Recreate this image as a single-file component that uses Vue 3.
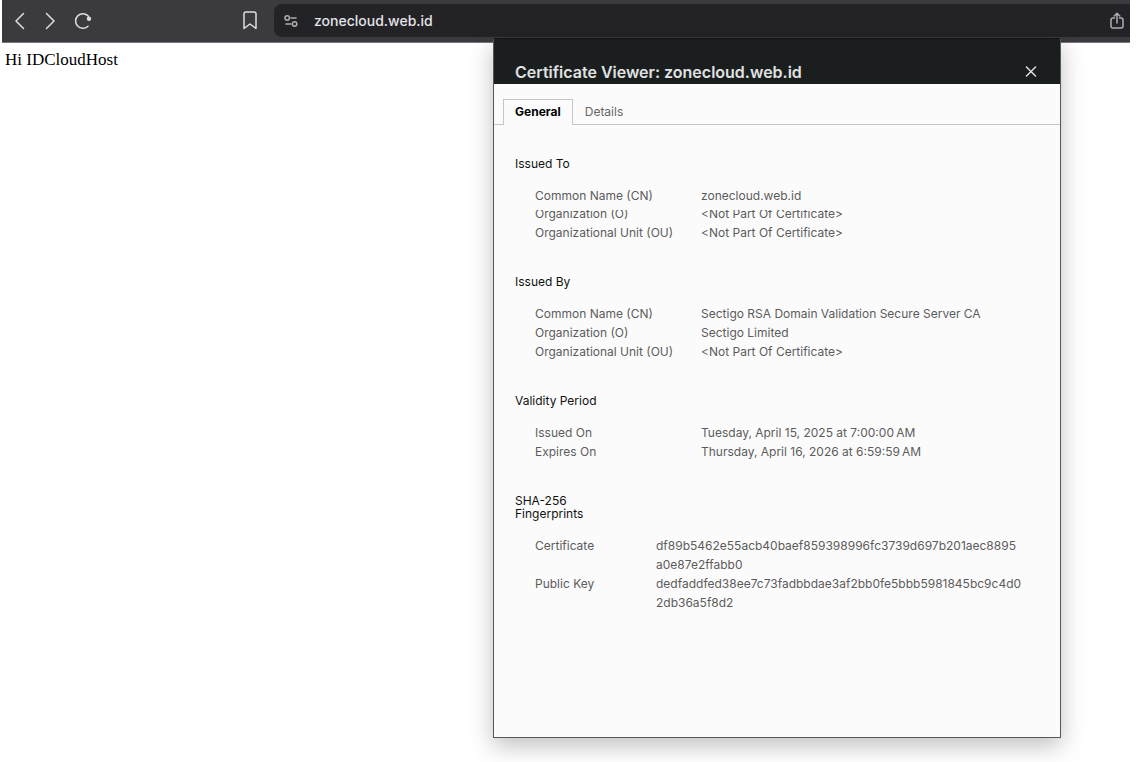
<script setup>
import { ref } from 'vue'

const address = ref('zonecloud.web.id')
const activeTab = ref('General')
const tabs = ['General', 'Details']

const sections = [
  {
    title: 'Issued To',
    rows: [
      { label: 'Common Name (CN)', value: 'zonecloud.web.id' },
      { label: 'Organization (O)', value: '<Not Part Of Certificate>', cut: true },
      { label: 'Organizational Unit (OU)', value: '<Not Part Of Certificate>' },
    ],
  },
  {
    title: 'Issued By',
    rows: [
      { label: 'Common Name (CN)', value: 'Sectigo RSA Domain Validation Secure Server CA' },
      { label: 'Organization (O)', value: 'Sectigo Limited' },
      { label: 'Organizational Unit (OU)', value: '<Not Part Of Certificate>' },
    ],
  },
  {
    title: 'Validity Period',
    rows: [
      { label: 'Issued On', value: 'Tuesday, April 15, 2025 at 7:00:00\u202fAM' },
      { label: 'Expires On', value: 'Thursday, April 16, 2026 at 6:59:59\u202fAM' },
    ],
  },
  {
    title: 'SHA-256 Fingerprints',
    narrow: true,
    rows: [
      { label: 'Certificate', value: 'df89b5462e55acb40baef859398996fc3739d697b201aec8895\na0e87e2ffabb0' },
      { label: 'Public Key', value: 'dedfaddfed38ee7c73fadbbdae3af2bb0fe5bbb5981845bc9c4d0\n2db36a5f8d2' },
    ],
  },
]
</script>

<template>
  <div class="browser">
    <header class="toolbar">
      <nav class="history" aria-label="History">
        <button class="icon-button" aria-label="Back">
          <svg width="12" height="18" viewBox="0 0 12 18"><path d="M9.5 1.5 2 9l7.500 7.500" /></svg>
        </button>
        <button class="icon-button" aria-label="Forward">
          <svg width="12" height="18" viewBox="0 0 12 18"><path d="M2.500 1.500 10 9l-7.500 7.500" /></svg>
        </button>
        <button class="icon-button" aria-label="Reload">
          <svg width="18" height="18" viewBox="0 0 18 18">
            <path d="M14 14.200A7.300 7.300 0 1 1 14.400 4.200" />
            <circle class="dot" cx="15" cy="6.800" r="2.200" />
          </svg>
        </button>
      </nav>
      <button class="icon-button" aria-label="Bookmark">
        <svg width="14" height="19" viewBox="0 0 14 19">
          <path d="M1 3a2 2 0 0 1 2-2h8a2 2 0 0 1 2 2v14.500l-6-4.500-6 4.500z" />
        </svg>
      </button>
      <div class="address">
        <button class="icon-button dim" aria-label="Site settings">
          <svg width="14" height="14" viewBox="0 0 14 14">
            <circle cx="3.200" cy="4" r="2.200" /><path d="M7 4h5" />
            <circle cx="10.600" cy="10" r="2.200" /><path d="M2 10h5" />
          </svg>
        </button>
        <input v-model="address" class="url" aria-label="Address" />
        <button class="icon-button dim" aria-label="Share">
          <svg width="14" height="18" viewBox="0 0 14 18">
            <path d="M4.500 6H3a2 2 0 0 0-2 2v6a2 2 0 0 0 2 2h8a2 2 0 0 0 2-2V8a2 2 0 0 0-2-2H9.500M7 11V1.500M4.200 4 7 1.300 9.800 4" />
          </svg>
        </button>
      </div>
    </header>

    <main class="page">Hi IDCloudHost</main>

    <section class="dialog" role="dialog" aria-labelledby="dialog-title">
      <header class="dialog-head">
        <h1 id="dialog-title">Certificate Viewer: zonecloud.web.id</h1>
        <button class="icon-button" aria-label="Close">
          <svg width="12" height="12" viewBox="0 0 12 12"><path d="m1.500 1 9 9m0-9-9 9" /></svg>
        </button>
      </header>
      <div class="tabs" role="tablist">
        <button
          v-for="tab in tabs"
          :key="tab"
          class="tab"
          :class="{ active: tab === activeTab }"
          role="tab"
          :aria-selected="tab === activeTab"
          @click="activeTab = tab"
        >{{ tab }}</button>
      </div>
      <div class="details">
        <section v-for="s in sections" :key="s.title" class="group" :class="{ narrow: s.narrow }">
          <h2>{{ s.title }}</h2>
          <dl>
            <div v-for="row in s.rows" :key="row.label" class="row" :class="{ cut: row.cut }">
              <dt>{{ row.label }}</dt>
              <dd>{{ row.value }}</dd>
            </div>
          </dl>
        </section>
      </div>
    </section>
  </div>
</template>

<style>
body {
  margin: 0;
  background: #fff;
}
</style>

<style scoped>
.browser {
  position: relative;
  box-sizing: border-box;
  min-height: 100vh;
  padding: 0 8px 0 2px;
  overflow: hidden;
  font-family: Inter, "Liberation Sans", sans-serif;
}
.toolbar {
  display: flex;
  align-items: center;
  box-sizing: border-box;
  height: 43px;
  padding: 4px 0 5px 12px;
  background: #3b3a3f;
  border-bottom: 1px solid #77767a;
}
.history {
  display: flex;
  align-items: center;
  gap: 18px;
  width: 229px;
}
.icon-button {
  display: flex;
  flex: none;
  padding: 0;
  border: 0;
  background: none;
  color: #dededf;
}
.icon-button svg {
  fill: none;
  stroke: currentColor;
  stroke-width: 1.5;
  stroke-linecap: round;
  stroke-linejoin: round;
}
.icon-button .dot {
  fill: currentColor;
  stroke: none;
}
.dim {
  color: #aeadb1;
}
.address {
  display: flex;
  flex: 1;
  align-items: center;
  height: 33px;
  margin-left: 17px;
  padding: 0 6px 0 10px;
  border-radius: 8px 0 0 8px;
  background: #232227;
}
.url {
  flex: 1;
  min-width: 0;
  margin-left: 16px;
  padding: 0;
  border: 0;
  outline: 0;
  background: none;
  color: #e4e4e6;
  font: 500 14px/20px Inter, "Liberation Sans", sans-serif;
}
.page {
  padding: 8px 3px;
  font: 17px/18px "Liberation Serif", serif;
  color: #000;
}
.dialog {
  position: absolute;
  top: 38px;
  right: 77px;
  box-sizing: border-box;
  width: 568px;
  min-height: 700px;
  border: 1px solid #555759;
  border-top-color: #101313;
  background: #fbfbfb;
  box-shadow: 0 8px 22px rgba(0, 0, 0, 0.25);
}
.dialog-head {
  display: flex;
  align-items: center;
  justify-content: space-between;
  box-sizing: border-box;
  height: 45px;
  padding: 20px 23px 0 21px;
  background: #1a1e1e;
}
.dialog-head h1 {
  margin: 0;
  color: #e0e2e2;
  font-size: 16px;
  line-height: 24px;
  font-weight: 600;
}
.tabs {
  display: flex;
  padding: 15px 9px 0;
  box-shadow: inset 0 -1px #c6c6c6;
}
.tab {
  box-sizing: border-box;
  height: 26px;
  padding: 0 11px 2px;
  border: 1px solid transparent;
  border-bottom: 0;
  background: none;
  color: #666;
  font: 12px/23px Inter, "Liberation Sans", sans-serif;
}
.tab.active {
  border-color: #c6c6c6;
  background: #fbfbfb;
  color: #000;
  font-weight: 700;
}
.details {
  display: grid;
  gap: 33px;
  padding: 32px 21px;
}
.group h2 {
  width: 80px;
  margin: 0 0 16px;
  color: #111;
  font-size: 12px;
  line-height: 13px;
  font-weight: 400;
  white-space: nowrap;
}
.narrow h2 {
  white-space: normal;
}
.group dl {
  margin: 0;
  padding-left: 20px;
  color: #5c5c5c;
  font-size: 12px;
  line-height: 19px;
}
.row {
  display: grid;
  grid-template-columns: 166px 1fr;
}
.narrow .row {
  grid-template-columns: 121px 1fr;
}
.row.cut {
  line-height: 18px;
  clip-path: inset(5px 0 0 0);
}
.row dd {
  margin: 0;
  white-space: pre-line;
}
</style>
